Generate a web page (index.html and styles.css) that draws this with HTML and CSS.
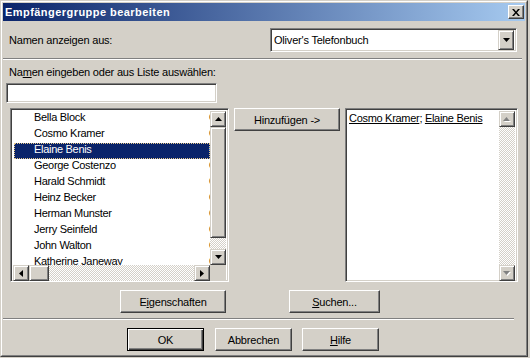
FILE: index.html
```html
<!DOCTYPE html>
<html lang="de">
<head>
<meta charset="utf-8">
<title>Empfängergruppe bearbeiten</title>
<link rel="stylesheet" href="styles.css">
</head>
<body>
<div class="window">
  <div class="frame">
    <div class="titlebar">
      <span class="title">Empfängergruppe bearbeiten</span>
      <div class="close">
        <svg width="8" height="7" viewBox="0 0 8 7"><path d="M0 0h2l2 2.5L6 0h2L5 3.5 8 7H6L4 4.5 2 7H0l3-3.5z" fill="#000"/></svg>
      </div>
    </div>

    <div class="row-source">
      <span class="label">Namen anzeigen aus:</span>
      <div class="combo">
        <span class="combo-text">Oliver's Telefonbuch</span>
        <div class="combo-btn">
          <svg width="7" height="4" viewBox="0 0 7 4"><path d="M0 0h7L3.5 4z" fill="#000"/></svg>
        </div>
      </div>
    </div>

    <div class="sep sep-top"></div>

    <div class="label label2">Na<u>m</u>en eingeben oder aus Liste auswählen:</div>
    <div class="field textbox"></div>

    <div class="lists">
      <div class="field listview">
        <div class="lv-top">
          <div class="rows">
            <div class="row"><span class="name">Bella Block</span><span class="col2">C</span></div>
            <div class="row"><span class="name">Cosmo Kramer</span><span class="col2">C</span></div>
            <div class="row sel"><span class="name">Elaine Benis</span><span class="col2">C</span></div>
            <div class="row"><span class="name">George Costenzo</span><span class="col2">C</span></div>
            <div class="row"><span class="name">Harald Schmidt</span><span class="col2">C</span></div>
            <div class="row"><span class="name">Heinz Becker</span><span class="col2">C</span></div>
            <div class="row"><span class="name">Herman Munster</span><span class="col2">C</span></div>
            <div class="row"><span class="name">Jerry Seinfeld</span><span class="col2">C</span></div>
            <div class="row"><span class="name">John Walton</span><span class="col2">C</span></div>
            <div class="row"><span class="name">Katherine Janeway</span><span class="col2">C</span></div>
          </div>
          <div class="vscroll">
            <div class="sbtn"><svg width="7" height="4" viewBox="0 0 7 4"><path d="M3.5 0L7 4H0z" fill="#000"/></svg></div>
            <div class="thumb vthumb"></div>
            <div class="track"></div>
            <div class="sbtn"><svg width="7" height="4" viewBox="0 0 7 4"><path d="M0 0h7L3.5 4z" fill="#000"/></svg></div>
          </div>
        </div>
        <div class="lv-bottom">
          <div class="hscroll">
            <div class="sbtn"><svg width="4" height="7" viewBox="0 0 4 7"><path d="M4 0v7L0 3.5z" fill="#000"/></svg></div>
            <div class="thumb hthumb"></div>
            <div class="track"></div>
            <div class="sbtn"><svg width="4" height="7" viewBox="0 0 4 7"><path d="M0 0v7l4-3.5z" fill="#000"/></svg></div>
          </div>
          <div class="corner"></div>
        </div>
      </div>

      <div class="btn add">Hinzufügen -&gt;</div>

      <div class="field richedit">
        <div class="re-text"><u>Cosmo Kramer</u>; <u>Elaine Benis</u></div>
        <div class="vscroll disabled">
          <div class="sbtn"><svg width="8" height="5" viewBox="0 0 8 5"><path d="M4.5 1L8 5H1z" fill="#fff"/><path d="M3.5 0L7 4H0z" fill="#808080"/></svg></div>
          <div class="track"></div>
          <div class="sbtn"><svg width="8" height="5" viewBox="0 0 8 5"><path d="M1 1h7L4.5 5z" fill="#fff"/><path d="M0 0h7L3.5 4z" fill="#808080"/></svg></div>
        </div>
      </div>
    </div>

    <div class="actions">
      <div class="btn props">E<u>i</u>genschaften</div>
      <div class="btn search"><u>S</u>uchen...</div>
    </div>

    <div class="sep sep-bottom"></div>

    <div class="footer">
      <div class="btn default">OK</div>
      <div class="btn cancel">Abbrechen</div>
      <div class="btn help"><u>H</u>ilfe</div>
    </div>
  </div>
</div>
</body>
</html>
```

FILE: styles.css
```css
html, body {
  margin: 0;
  padding: 0;
  background: #d4d0c8;
}

body {
  font-family: "Liberation Sans", Arial, sans-serif;
  font-size: 11px;
  letter-spacing: -0.2px;
  color: #000;
}

.window {
  width: 528px;
  height: 357px;
  box-sizing: border-box;
  border: 1px solid;
  border-color: #d4d0c8 #404040 #404040 #d4d0c8;
  background: #d4d0c8;
  overflow: hidden;
}

.frame {
  height: 100%;
  box-sizing: border-box;
  border: 1px solid;
  border-color: #fff #808080 #808080 #fff;
  padding: 1px;
  display: flex;
  flex-direction: column;
}

/* title bar */
.titlebar {
  height: 18px;
  flex: none;
  display: flex;
  align-items: center;
  background: linear-gradient(to right, #0a246a, #a6caf0);
  padding: 0 1px 0 2px;
}

.title {
  color: #fff;
  font-weight: bold;
  font-size: 11px;
  letter-spacing: 0.45px;
  white-space: nowrap;
}

.close {
  margin-left: auto;
  width: 16px;
  height: 14px;
  box-sizing: border-box;
  display: flex;
  align-items: center;
  justify-content: center;
  background: #d4d0c8;
  border: 1px solid;
  border-color: #fff #404040 #404040 #fff;
  box-shadow: inset -1px -1px #808080;
}

/* raised / sunken helpers */
.field {
  box-sizing: border-box;
  background: #fff;
  border: 1px solid;
  border-color: #808080 #fff #fff #808080;
  box-shadow: inset 1px 1px #404040, inset -1px -1px #d4d0c8;
}

.btn {
  box-sizing: border-box;
  height: 23px;
  display: flex;
  align-items: center;
  justify-content: center;
  background: #d4d0c8;
  border: 1px solid;
  border-color: #fff #404040 #404040 #fff;
  box-shadow: inset -1px -1px #808080;
  white-space: nowrap;
}

.btn u, .label u {
  text-decoration: underline;
  text-underline-offset: 1px;
}

.btn.default {
  border-color: #000;
  box-shadow: inset 1px 1px #fff, inset -1px -1px #404040, inset -2px -2px #808080;
}

/* row 1 */
.row-source {
  display: flex;
  align-items: center;
  height: 24px;
  margin-top: 7px;
}

.label {
  padding-left: 6px;
  line-height: 13px;
}

.combo {
  margin-left: auto;
  margin-right: 8px;
  width: 247px;
  height: 24px;
  display: flex;
  align-items: center;
  padding: 2px;
  box-sizing: border-box;
  background: #fff;
  border: 1px solid;
  border-color: #808080 #fff #fff #808080;
  box-shadow: inset 1px 1px #404040, inset -1px -1px #d4d0c8;
}

.combo-text {
  flex: 1;
  padding-left: 1px;
}

.combo-btn {
  width: 16px;
  height: 20px;
  box-sizing: border-box;
  display: flex;
  align-items: center;
  justify-content: center;
  background: #d4d0c8;
  border: 1px solid;
  border-color: #d4d0c8 #404040 #404040 #d4d0c8;
  box-shadow: inset 1px 1px #fff, inset -1px -1px #808080;
}

.sep {
  height: 2px;
  box-sizing: border-box;
  border-top: 1px solid #808080;
  border-bottom: 1px solid #fff;
}

.sep-top {
  width: 519px;
  margin-top: 6px;
}

.label2 {
  margin-top: 6px;
}

.textbox {
  margin-top: 4px;
  margin-left: 3px;
  width: 211px;
  height: 20px;
}

/* lists row */
.lists {
  display: flex;
  align-items: flex-start;
  margin-top: 5px;
  height: 174px;
}

.listview {
  margin-left: 7px;
  width: 219px;
  height: 174px;
  padding: 2px;
  display: flex;
  flex-direction: column;
}

.lv-top {
  display: flex;
  height: 154px;
}

.rows {
  width: 199px;
  height: 154px;
  overflow: hidden;
}

.row {
  display: grid;
  grid-template-columns: 196px 20px;
  height: 16px;
  line-height: 13px;
  letter-spacing: -0.3px;
  white-space: nowrap;
  overflow: hidden;
}

.row .name {
  padding-left: 21px;
}

.row.sel {
  margin-left: 1px;
  grid-template-columns: 195px 20px;
  background: #0a246a;
  color: #fff;
  outline: 1px dotted #e6c98a;
  outline-offset: -1px;
}

.row.sel .name {
  padding-left: 20px;
}

.vscroll {
  width: 16px;
  display: flex;
  flex-direction: column;
}

.sbtn {
  width: 16px;
  height: 16px;
  flex: none;
  box-sizing: border-box;
  display: flex;
  align-items: center;
  justify-content: center;
  background: #d4d0c8;
  border: 1px solid;
  border-color: #d4d0c8 #404040 #404040 #d4d0c8;
  box-shadow: inset 1px 1px #fff, inset -1px -1px #808080;
}

.thumb {
  flex: none;
  box-sizing: border-box;
  background: #d4d0c8;
  border: 1px solid;
  border-color: #d4d0c8 #404040 #404040 #d4d0c8;
  box-shadow: inset 1px 1px #fff, inset -1px -1px #808080;
}

.vthumb {
  height: 111px;
}

.hthumb {
  width: 20px;
  height: 16px;
}

.track {
  flex: 1;
  background: repeating-conic-gradient(#d4d0c8 0 25%, #fff 0 50%) 0 0 / 2px 2px;
}

.lv-bottom {
  display: flex;
  height: 16px;
}

.hscroll {
  width: 199px;
  display: flex;
}

.corner {
  width: 16px;
  height: 16px;
  background: #d4d0c8;
}

.add {
  margin-left: 5px;
  width: 106px;
}

.richedit {
  margin-left: 5px;
  width: 173px;
  height: 174px;
  padding: 2px;
  display: flex;
}

.re-text {
  flex: 1;
  padding-left: 1px;
  line-height: 14px;
  letter-spacing: -0.3px;
  white-space: nowrap;
  overflow: hidden;
}

.vscroll.disabled {
  height: 170px;
}

/* buttons row */
.actions {
  display: flex;
  margin-top: 8px;
  padding-left: 117px;
}

.props {
  width: 106px;
}

.search {
  width: 91px;
  margin-left: 63px;
}

.sep-bottom {
  width: 511px;
  margin-top: 5px;
}

.footer {
  display: flex;
  margin-top: 8px;
  padding-left: 124px;
}

.footer .btn {
  width: 77px;
}

.cancel {
  margin-left: 11px;
}

.help {
  margin-left: 10px;
}
```
